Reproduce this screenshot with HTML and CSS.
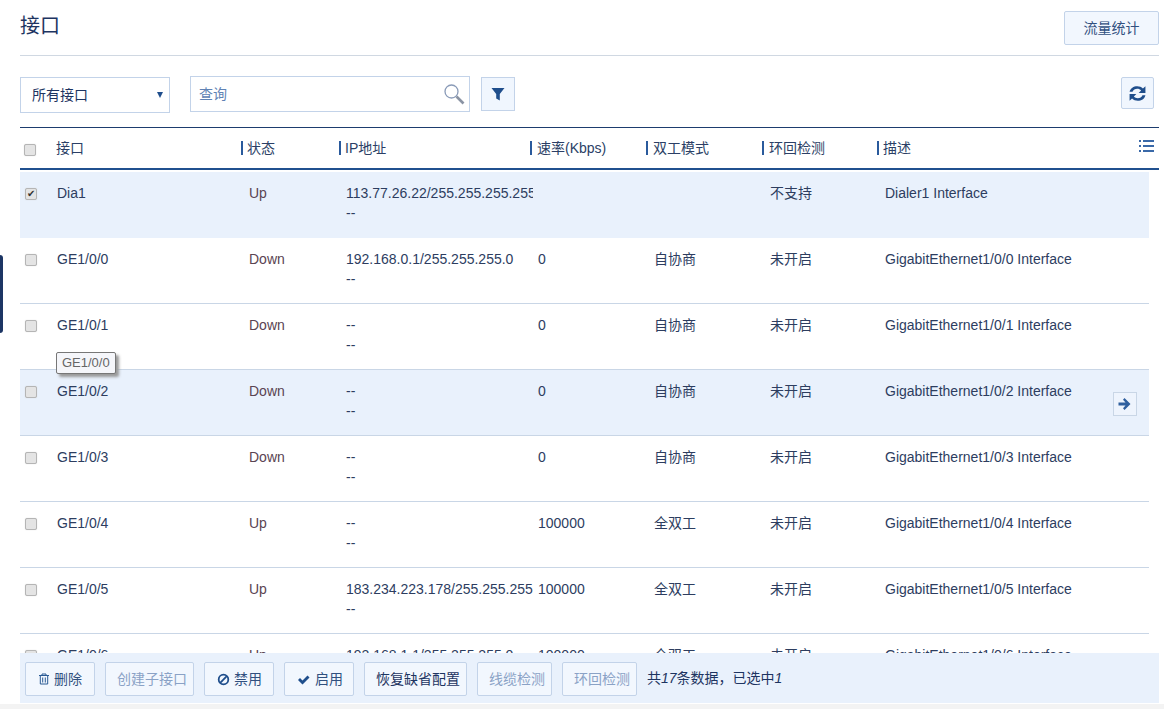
FILE: index.html
```html
<!DOCTYPE html>
<html lang="zh">
<head>
<meta charset="utf-8">
<title>接口</title>
<link rel="stylesheet" href="styles.css">
</head>
<body>
<div class="side-tab"></div>
<main class="page">
  <header class="head">
    <h1 class="title">接口</h1>
    <button class="btn stat">流量统计</button>
  </header>
  <div class="toolbar">
    <div class="select"><span>所有接口</span><i class="caret"></i></div>
    <div class="search"><span>查询</span>
      <svg class="lens" width="21" height="21" viewBox="0 0 21 21"><circle cx="7.500" cy="7.500" r="6.500" fill="none" stroke="#8a9bb8" stroke-width="1.300"/><path d="M12.500 12.500l7 7" stroke="#8a93a3" stroke-width="2.600"/></svg>
    </div>
    <button class="icon-btn filter"><svg width="14" height="14" viewBox="0 0 14 14"><path d="M0.500 1h13L8.800 7v6.500L5.200 11.500V7z" fill="#1f4e8c"/></svg></button>
    <button class="icon-btn refresh"><svg width="17" height="17" viewBox="2 1.500 14 15"><path d="M2 7.500C2.800 4.200 5.500 2.500 8.800 2.500c2 0 3.700.8 5 2L16 2.500v6h-6l2.200-2.200c-.9-.9-2.100-1.400-3.400-1.400-2 0-3.500 1-4.200 2.600zM16 10.500c-.8 3.300-3.500 5-6.800 5-2 0-3.700-.8-5-2L2 15.500v-6h6l-2.200 2.200c.9.900 2.100 1.400 3.400 1.400 2 0 3.500-1 4.200-2.600z" fill="#1f4e8c"/></svg></button>
  </div>
  <section class="table">
    <div class="thead">
      <span class="h0"><i class="cb"></i></span>
      <span class="h1">接口</span>
      <span class="h2 th">状态</span>
      <span class="h3 th">IP地址</span>
      <span class="h4 th">速率(Kbps)</span>
      <span class="h5 th">双工模式</span>
      <span class="h6 th">环回检测</span>
      <span class="h7 th">描述</span>
      <svg class="cols" width="15" height="12" viewBox="0 0 15 12"><g fill="#3a69a8"><rect x="0" y="0" width="2" height="2"/><rect x="4" y="0" width="11" height="2"/><rect x="0" y="5" width="2" height="2"/><rect x="4" y="5" width="11" height="2"/><rect x="0" y="10" width="2" height="2"/><rect x="4" y="10" width="11" height="2"/></g></svg>
    </div>
    <div class="rows">
      <div class="row sel"><span class="c0"><i class="cb on">✔</i></span><span class="c1">Dia1</span><span class="c2 st">Up</span><span class="c3">113.77.26.22/255.255.255.255<br>--</span><span class="c4"></span><span class="c5"></span><span class="c6">不支持</span><span class="c7">Dialer1 Interface</span></div>
      <div class="row"><span class="c0"><i class="cb"></i></span><span class="c1">GE1/0/0</span><span class="c2 st">Down</span><span class="c3">192.168.0.1/255.255.255.0<br>--</span><span class="c4">0</span><span class="c5">自协商</span><span class="c6">未开启</span><span class="c7">GigabitEthernet1/0/0 Interface</span></div>
      <div class="row"><span class="c0"><i class="cb"></i></span><span class="c1">GE1/0/1</span><span class="c2 st">Down</span><span class="c3">--<br>--</span><span class="c4">0</span><span class="c5">自协商</span><span class="c6">未开启</span><span class="c7">GigabitEthernet1/0/1 Interface</span></div>
      <div class="row sel"><span class="c0"><i class="cb"></i></span><span class="c1">GE1/0/2</span><span class="c2 st">Down</span><span class="c3">--<br>--</span><span class="c4">0</span><span class="c5">自协商</span><span class="c6">未开启</span><span class="c7">GigabitEthernet1/0/2 Interface</span>
        <button class="go"><svg width="14" height="14" viewBox="0 0 14 14"><path d="M0.500 5.500h7L5 2.800 6.500 1l6 6-6 6L5 11.200 7.500 8.500h-7z" fill="#2f5f9e"/></svg></button>
      </div>
      <div class="row"><span class="c0"><i class="cb"></i></span><span class="c1">GE1/0/3</span><span class="c2 st">Down</span><span class="c3">--<br>--</span><span class="c4">0</span><span class="c5">自协商</span><span class="c6">未开启</span><span class="c7">GigabitEthernet1/0/3 Interface</span></div>
      <div class="row"><span class="c0"><i class="cb"></i></span><span class="c1">GE1/0/4</span><span class="c2 st">Up</span><span class="c3">--<br>--</span><span class="c4">100000</span><span class="c5">全双工</span><span class="c6">未开启</span><span class="c7">GigabitEthernet1/0/4 Interface</span></div>
      <div class="row"><span class="c0"><i class="cb"></i></span><span class="c1">GE1/0/5</span><span class="c2 st">Up</span><span class="c3">183.234.223.178/255.255.255.255<br>--</span><span class="c4">100000</span><span class="c5">全双工</span><span class="c6">未开启</span><span class="c7">GigabitEthernet1/0/5 Interface</span></div>
      <div class="row"><span class="c0"><i class="cb"></i></span><span class="c1">GE1/0/6</span><span class="c2 st">Up</span><span class="c3">192.168.1.1/255.255.255.0<br>--</span><span class="c4">100000</span><span class="c5">全双工</span><span class="c6">未开启</span><span class="c7">GigabitEthernet1/0/6 Interface</span></div>
    </div>
  </section>
  <footer class="actions">
    <button class="btn act w70"><svg width="12" height="12" viewBox="0 0 12 12"><path d="M1 2.500h10M4 2.500V1h4v1.500M2.300 2.500v8.500h7.400V2.500M4.700 4.500v5M7.300 4.500v5" fill="none" stroke="#2a5a94" stroke-width="1"/></svg>删除</button>
    <button class="btn act off w89">创建子接口</button>
    <button class="btn act w70"><svg width="13" height="13" viewBox="0 0 13 13"><circle cx="6.500" cy="6.500" r="4.800" fill="none" stroke="#1f4e8c" stroke-width="1.800"/><path d="M3.200 9.800l6.600-6.600" stroke="#1f4e8c" stroke-width="1.800"/></svg>禁用</button>
    <button class="btn act w70 wide-gap"><svg width="13" height="13" viewBox="0 0 13 13"><path d="M1 7l2-2 2.500 2.500L10.500 2.500l2 2-7 7z" fill="#1f4e8c"/></svg>启用</button>
    <button class="btn act dark w103">恢复缺省配置</button>
    <button class="btn act off w75">线缆检测</button>
    <button class="btn act off w75">环回检测</button>
    <span class="summary">共<em>17</em>条数据，已选中<em>1</em></span>
  </footer>
</main>
<div class="tip">GE1/0/0</div>
</body>
</html>
```
FILE: styles.css
```css
* { box-sizing: border-box; }
html, body { margin: 0; height: 709px; overflow: hidden; }
body {
  position: relative;
  background: #fff;
  color: #1d3461;
  font: 14px/20px "Liberation Sans", "Noto Sans CJK SC", sans-serif;
}
button { font: inherit; color: inherit; cursor: default; padding: 0; }
.side-tab {
  position: absolute; left: 0; top: 255px; width: 3px; height: 78px;
  background: #1c3564; border-radius: 0 3px 3px 0;
}
.page { margin-left: 20px; width: 1139px; height: 703px; display: flex; flex-direction: column; position: relative; overflow: hidden; }
.head { height: 56px; display: flex; justify-content: space-between; align-items: flex-start; border-bottom: 1px solid #d0d8e2; padding-top: 11px; }
.title { margin: 3px 0 0; font-size: 20px; line-height: 24px; font-weight: 400; }
.btn { background: #f2f7fe; border: 1px solid #c3d3e9; border-radius: 2px; }
.stat { width: 95px; height: 34px; color: #31507f; }
.toolbar { height: 71px; display: flex; align-items: flex-start; padding-top: 20px; }
.select { width: 150px; height: 36px; margin-top: 1px; border: 1px solid #c3d3e9; display: flex; align-items: center; justify-content: space-between; padding: 0 6px 0 11px; }
.caret { width: 0; height: 0; border-left: 3px solid transparent; border-right: 3px solid transparent; border-top: 6px solid #1f4e8c; }
.search { width: 280px; height: 36px; margin-left: 20px; border: 1px solid #c3d3e9; display: flex; align-items: center; justify-content: space-between; padding: 0 4px 0 8px; color: #5f82b4; }
.icon-btn { background: #f0f6fe; border: 1px solid #c3d3e9; display: flex; align-items: center; justify-content: center; }
.filter { width: 34px; height: 34px; margin: 1px 0 0 11px; }
.refresh { width: 33px; height: 32px; margin: 1px 5px 0 auto; border-radius: 2px; }
.table { border-top: 1px solid #1d3c6e; flex: 1; min-height: 0; overflow: hidden; }
.thead { height: 42px; border-bottom: 2px solid #20508f; display: flex; align-items: center; position: relative; color: #2b3f66; }
.th { position: relative; padding-left: 6px; line-height: 14px; }
.th::before { content: ""; position: absolute; left: 0; top: 0; width: 2px; height: 14px; background: #2a5a9c; }
.h0 { width: 36px; padding: 3px 0 0 4px; display: flex; }
.h1 { width: 185px; }
.h2 { width: 98px; }
.h3 { width: 191px; }
.h4 { width: 116px; padding-left: 7px; }
.h5 { width: 116px; padding-left: 7px; }
.h6 { width: 115px; padding-left: 7px; }
.cols { position: absolute; right: 5px; top: 12px; }
.rows { width: 1129px; margin-top: 2px; }
.row { height: 66px; display: flex; align-items: flex-start; padding-top: 11px; border-bottom: 1px solid #c9d6e6; position: relative; color: #2d3d5f; }
.row:first-child { border-bottom: 0; }
.row.sel { background: #e9f1fc; }
.c0 { width: 37px; padding-left: 5px; display: flex; align-items: center; height: 22px; }
.c1 { width: 185px; }
.c2 { width: 97px; padding-left: 7px; }
.c3 { width: 194px; padding-left: 7px; white-space: nowrap; overflow: hidden; }
.c4 { width: 114px; padding-left: 5px; }
.c5 { width: 116px; padding-left: 7px; }
.c6 { width: 115px; padding-left: 7px; }
.c7 { padding-left: 7px; white-space: nowrap; }
.st { color: #5a4452; }
.cb { display: flex; align-items: center; justify-content: center; width: 12px; height: 12px; border: 1px solid #b5b5b5; border-radius: 2px; background: #e4e4e4; box-shadow: 0 0 1px #ccc; font-style: normal; font-size: 10px; line-height: 10px; color: #333; }
.go { position: absolute; right: 12px; top: 22px; width: 24px; height: 24px; background: #eef4fd; border: 1px solid #c9d6e6; display: flex; align-items: center; justify-content: center; }
.actions { position: absolute; left: 0; top: 653px; width: 1139px; height: 50px; background: #e9f1fc; display: flex; align-items: center; gap: 10px; padding: 2px 0 0 5px; }
.act { height: 34px; padding: 0 0 0 12px; display: inline-flex; align-items: center; gap: 4px; color: #31507f; white-space: nowrap; }
.w70 { width: 70px; }
.w75 { width: 75px; }
.w89 { width: 89px; }
.w103 { width: 103px; }
.wide-gap { gap: 5px; }
.act.off, .act.dark { padding-left: 11px; }
.act.off { color: #8aa2c6; }
.act.dark { color: #1d3461; }
.summary { margin-top: -2px; color: #1d3461; }
.tip {
  position: absolute; left: 56px; top: 352px; height: 22px; padding: 0 5px; line-height: 20px;
  font-size: 13px; color: #666; background: #f5f6fa; border: 1px solid #777; border-radius: 2px;
  box-shadow: 3px 3px 3px #999;
}
body::after { content: ""; position: absolute; left: 0; right: 0; top: 704px; height: 5px; background: #f3f3f3; }
```
